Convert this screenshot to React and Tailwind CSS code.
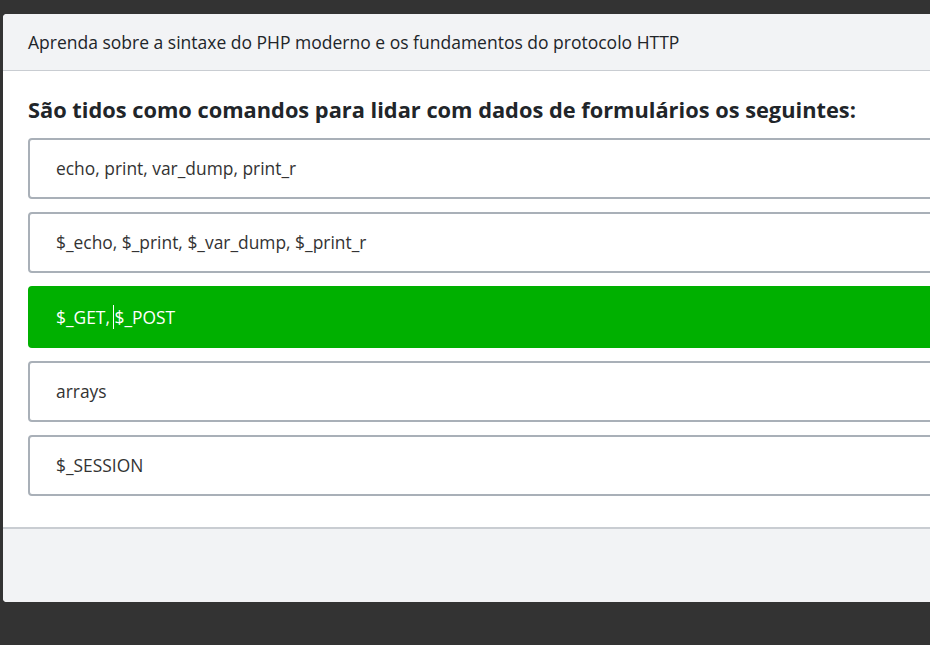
export default function App() {
  const options = [
    { text: 'echo, print, var_dump, print_r' },
    { text: '$_echo, $_print, $_var_dump, $_print_r' },
    { text: '$_GET, $_POST', selected: true },
    { text: 'arrays' },
    { text: '$_SESSION' },
  ];

  return (
    <div
      className="w-[930px] h-[645px] bg-[#333333] overflow-hidden pt-[14px] pl-[3px]"
      style={{ fontFamily: '"Open Sans", "Noto Sans", sans-serif' }}
    >
      <div className="w-[1000px] h-[588px] bg-white rounded-[4px] overflow-hidden flex flex-col">
        <div className="h-[57px] bg-[#f2f3f5] border-b border-[#c9cdd2] flex items-center px-[25px]">
          <p className="text-[17.5px] text-[#212529]">
            Aprenda sobre a sintaxe do PHP moderno e os fundamentos do protocolo HTTP
          </p>
        </div>

        <div className="flex-1 px-[25px] pt-[24px]">
          <h2 className="text-[21.8px] font-bold text-[#212529] leading-[30px] mb-[13px]">
            São tidos como comandos para lidar com dados de formulários os seguintes:
          </h2>
          <div className="flex flex-col gap-[13px]">
            {options.map((o) =>
              o.selected ? (
                <div
                  key={o.text}
                  className="h-[62px] rounded-[4px] bg-[#00b000] border-2 border-[#00b000] flex items-center px-[26px] text-[17.4px] text-white"
                >
                  $_GET,&nbsp;<span className="inline-block w-px h-[24px] bg-white -ml-[1px]" />$_POST
                </div>
              ) : (
                <div
                  key={o.text}
                  className="h-[61px] rounded-[4px] bg-white border-2 border-[#a9b0b8] flex items-center px-[26px] text-[17.4px] text-[#333]"
                >
                  {o.text}
                </div>
              )
            )}
          </div>
        </div>

        <div className="h-[75px] bg-[#f2f3f5] border-t-2 border-[#c9cdd2]" />
      </div>
    </div>
  );
}
